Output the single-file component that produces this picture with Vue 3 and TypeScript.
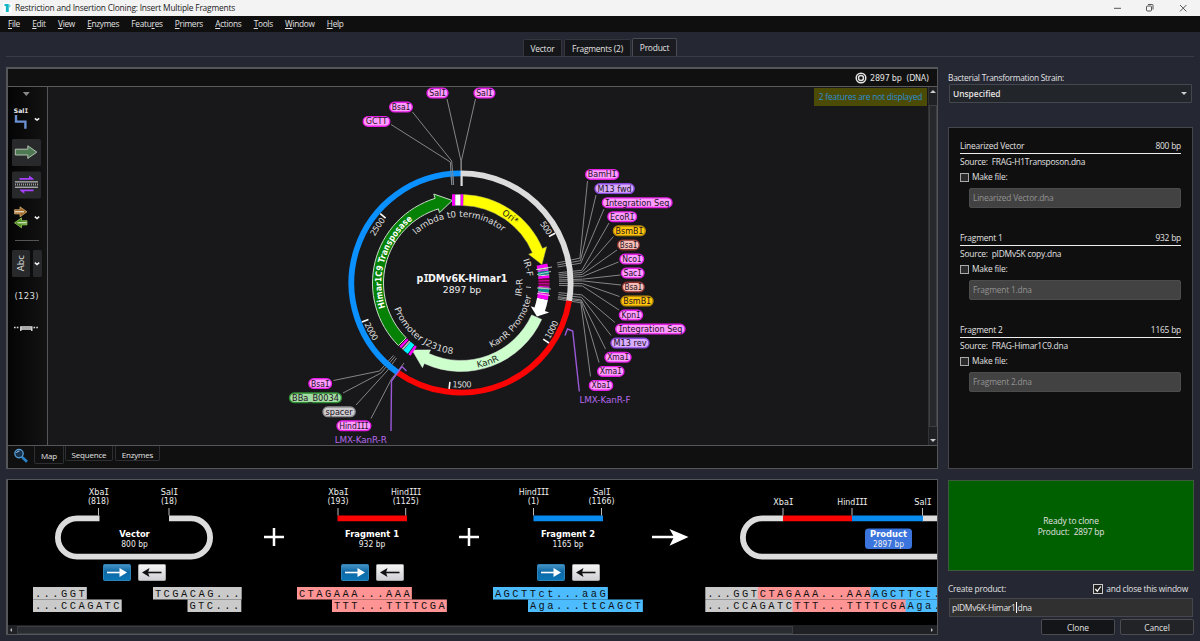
<script setup lang="ts">
interface Label {
  t: string
  x: number
  w: number
  y: number
  kind: string
  line: number[][]
}

const CX = 461
const CY = 283

function pt(r: number, deg: number): number[] {
  const a = (deg * Math.PI) / 180
  return [+(CX + r * Math.sin(a)).toFixed(2), +(CY - r * Math.cos(a)).toFixed(2)]
}
function arc(r: number, a: number, b: number): string {
  const large = Math.abs(b - a) > 180 ? 1 : 0
  return `M${pt(r, a)} A${r} ${r} 0 ${large} ${b > a ? 1 : 0} ${pt(r, b)}`
}
// Band between two radii, optionally ending in an arrow head
function band(a: number, b: number, tip?: number, r1 = 77.5, r2 = 88.5): string {
  const d = b > a ? 1 : 0
  const large = Math.abs(b - a) > 180 ? 1 : 0
  const head = tip === undefined ? `L${pt(r1, b)}` : `L${pt(r2 + 4.5, b)} L${pt(83, tip)} L${pt(r1 - 4, b)} L${pt(r1, b)}`
  return `M${pt(r1, a)} L${pt(r2, a)} A${r2} ${r2} 0 ${large} ${d} ${pt(r2, b)} ${head} A${r1} ${r1} 0 ${large} ${1 - d} ${pt(r1, a)}Z`
}
function poly(p: number[][]): string {
  return p.map((q) => q.join(',')).join(' ')
}
// Capital I is set with serifs in enzyme names
function parts(t: string): { s: string; serif: boolean }[] {
  return t.split(/(I+)/).filter(Boolean).map((s) => ({ s, serif: s[0] === 'I' }))
}

const rightSites: [string, number, number, number, string, number, number, number][] = [
  ['BamHI', 585, 34.3, 174.3, 'pink', 587.5, 181, 78.2],
  ['M13 fwd', 594.3, 40.5, 188.5, 'violet', 596, 195, 79.4],
  ['Integration Seq', 601.7, 71, 202.6, 'pink', 604, 209, 80.6],
  ['EcoRI', 607.2, 30, 216.6, 'pink', 609, 223, 84],
  ['BsmBI', 612.7, 33.3, 230.7, 'gold', 613.5, 236.5, 85],
  ['BsaI', 617, 23, 244.8, 'rose', 617, 250, 86],
  ['NcoI', 619.3, 25, 259, 'pink', 618.5, 262, 87],
  ['SacI', 620.7, 24, 273, 'pink', 620.5, 275, 88.2],
  ['BsaI', 621.7, 23.3, 287, 'rose', 621, 285, 89],
  ['BsmBI', 620.3, 33.4, 301, 'gold', 619.5, 296.5, 90.3],
  ['KpnI', 618.7, 24.6, 315, 'pink', 619, 310, 91.4],
  ['Integration Seq', 615, 70.7, 329, 'pink', 615, 322.5, 95.6],
  ['M13 rev', 610.3, 39.4, 343, 'violet', 611, 335.5, 96.8],
  ['XmaI', 604.3, 27.4, 357.2, 'pink', 605.5, 349, 98],
  ['XmaI', 597, 27.6, 371.3, 'pink', 599, 362.5, 98.6],
  ['XbaI', 588.7, 24.6, 385.3, 'pink', 590.5, 376.5, 99.4],
]
const labels: Label[] = [
  ...rightSites.map(([t, x, w, y, kind, lx, ly, a]) => ({ t, x, w, y, kind, line: [[lx, ly], pt(121.5, a), pt(98, a)] })),
  { t: 'SalI', x: 426.3, w: 22.4, y: 93, kind: 'pink', line: [[447, 99], [461, 161], [461, 171]] },
  { t: 'SalI', x: 473.3, w: 22.2, y: 93, kind: 'pink', line: [[475.5, 99], [461.3, 161], [461.3, 171]] },
  { t: 'BsaI', x: 389, w: 24, y: 107, kind: 'pink', line: [[412.5, 112], [451.7, 161], [453.6, 185]] },
  { t: 'GCTT', x: 362.5, w: 28, y: 121.3, kind: 'pink', line: [[391, 124.5], [450.3, 162], [451.8, 185]] },
  { t: 'BsaI', x: 308.2, w: 24, y: 383.5, kind: 'pink', line: [[333.5, 380.5], [379.5, 371], [393.5, 355.3]] },
  { t: 'BBa_B0034', x: 288.8, w: 53.4, y: 397.7, kind: 'green', line: [[343, 393], [381, 373], [395, 356.5]] },
  { t: 'spacer', x: 322.3, w: 33.6, y: 411.7, kind: 'gray', line: [[356, 405], [387, 371], [396.5, 358]] },
  { t: 'HindIII', x: 336.3, w: 35.2, y: 425.7, kind: 'pink', line: [[371, 418.5], [391.5, 379], [404, 363]] },
]

const ticks = [
  { n: 500, a: 62.1, from: 53, to: 60.6, r: 98.5 },
  { n: 1000, a: 124.3, from: 122.5, to: 111.7, r: 105 },
  { n: 1500, a: 186.4, from: 184.8, to: 173.8, r: 104.5 },
  { n: 2000, a: 248.5, from: 247, to: 236, r: 105 },
  { n: 2500, a: 310.7, from: 298.3, to: 309.2, r: 98 },
]
const curved = [
  { id: 'lt0', t: 'lambda t0 terminator', r: 66, a: -43, b: 39, fill: '#ddd' },
  { id: 'ori', t: 'Ori*', r: 79.8, a: 30.5, b: 42.8, fill: '#222' },
  { id: 'him', t: 'Himar1C9 Transposase', r: 79.6, a: 252, b: 322.5, fill: '#fff', bold: true },
  { id: 'pro', t: 'Promoter J23108', r: 71.5, a: 249, b: 186.5, fill: '#ddd' },
  { id: 'kpr', t: 'KanR Promoter', r: 71.5, a: 155, b: 100.5, fill: '#ddd' },
  { id: 'kan', t: 'KanR', r: 86.3, a: 169, b: 153.8, fill: '#1c2c1c' },
  { id: 'irf', t: 'IR-F', r: 66.3, a: 69.5, b: 84.5, fill: '#ddd' },
  { id: 'irr', t: 'IR-R', r: 61.5, a: 103, b: 86, fill: '#ddd' },
]
const stack: [number, number, string][] = [
  [77.2, 79.8, '#ff00ff'], [79.8, 80.6, '#d8d8d8'], [80.6, 82, '#c040e0'], [82, 84.4, '#009090'],
  [84.4, 85.2, '#ddd'], [85.2, 87, '#ff00ff'], [87, 88, '#700040'], [88, 89, '#e000a0'],
  [89, 90.2, '#70003c'], [90.2, 91, '#f000c0'], [91, 92.2, '#80104c'], [92.2, 93, '#ff00ff'], [93, 93.8, '#aaa'],
  [93.8, 96.2, '#009090'], [96.2, 97, '#ddd'], [97, 101, '#ff00ff'],
]

const menu = [['', 'F', 'ile'], ['', 'E', 'dit'], ['', 'V', 'iew'], ['', 'E', 'nzymes'], ['Featu', 'r', 'es'], ['', 'P', 'rimers'], ['', 'A', 'ctions'], ['', 'T', 'ools'], ['', 'W', 'indow'], ['', 'H', 'elp']]
const sources = [
  { name: 'Linearized Vector', bp: '800 bp', src: 'FRAG-H1Transposon.dna', file: 'Linearized Vector.dna' },
  { name: 'Fragment 1', bp: '932 bp', src: 'pIDMv5K copy.dna', file: 'Fragment 1.dna' },
  { name: 'Fragment 2', bp: '1165 bp', src: 'FRAG-Himar1C9.dna', file: 'Fragment 2.dna' },
]

const sites = [
  { x: 98.5, w: 19.5, t: 'XbaI', p: '(818)', pw: 21 }, { x: 169, w: 16.5, t: 'SalI', p: '(18)', pw: 16 },
  { x: 338, w: 19.5, t: 'XbaI', p: '(193)', pw: 21 }, { x: 405.7, w: 29.5, t: 'HindIII', p: '(1125)', pw: 26 },
  { x: 533.5, w: 29.5, t: 'HindIII', p: '(1)', pw: 11.5 }, { x: 601.5, w: 16.5, t: 'SalI', p: '(1166)', pw: 26 },
  { x: 783, w: 19.5, t: 'XbaI', p: '', pw: 0 }, { x: 852, w: 29.5, t: 'HindIII', p: '', pw: 0 }, { x: 922.5, w: 16.5, t: 'SalI', p: '', pw: 0 },
]
const titles = [
  { x: 134.5, t: 'Vector', w: 30.5, s: '800 bp', sw: 26.5 },
  { x: 372, t: 'Fragment 1', w: 54, s: '932 bp', sw: 26.5 },
  { x: 568, t: 'Fragment 2', w: 54, s: '1165 bp', sw: 31 },
  { x: 888.5, t: 'Product', w: 37, s: '2897 bp', sw: 31 },
]
const G = '#cacaca'
const R = '#ff9494'
const B = '#4cbcff'
const seqs = [
  { x: 33, row: 0, c: G, t: '...GGT' }, { x: 33, row: 1, c: G, t: '...CCAGATC' },
  { x: 153, row: 0, c: G, t: 'TCGACAG...' }, { x: 187.5, row: 1, c: G, t: 'GTC...' },
  { x: 297, row: 0, c: R, t: 'CTAGAAA...AAA' }, { x: 332, row: 1, c: R, t: 'TTT...TTTTCGA' },
  { x: 493, row: 0, c: B, t: 'AGCTTct...aaG' }, { x: 528, row: 1, c: B, t: 'Aga...ttCAGCT' },
  { x: 705.3, row: 0, c: G, t: '...GGT' }, { x: 757.8, row: 0, c: R, t: 'CTAGAAA...AAA' }, { x: 870.6, row: 0, c: B, t: 'AGCTTct.' },
  { x: 705.3, row: 1, c: G, t: '...CCAGATC' }, { x: 792.6, row: 1, c: R, t: 'TTT...TTTTCGA' }, { x: 905.6, row: 1, c: B, t: 'Aga.' },
]
</script>

<template>
  <div class="win">
    <header class="title">
      <svg class="logo" width="9" height="10" viewBox="0 0 9 10"><rect width="9" height="10" rx="1.5" fill="#fff" /><path d="M2.2 1V3M3.6 1V9M5 1V9" stroke="#13b5c4" stroke-width="1.5" /><path d="M6 2.2h1.6M6 3.8h1.4" stroke="#36c5d0" stroke-width="1" /></svg>
      <span class="ttl">Restriction and Insertion Cloning: Insert Multiple Fragments</span>
      <svg class="ctl" width="80" height="16" viewBox="1110 0 80 16" fill="none" stroke="#444" stroke-width="0.9">
        <path d="M1114 8.3h7M1180 5l6.4 6.4M1186.4 5l-6.4 6.4" /><rect x="1146.5" y="6" width="5" height="5" rx="1" /><path d="M1148 4.5h4.2q.8 0 .8.8v4.2" />
      </svg>
    </header>
    <nav class="menu"><span v-for="m in menu" :key="m.join('')">{{ m[0] }}<u>{{ m[1] }}</u>{{ m[2] }}</span></nav>

    <div class="tabs">
      <span class="tab t1">Vector</span><span class="tab t2">Fragments (2)</span><span class="tab t3">Product</span>
    </div>

    <main class="body">
      <section class="left">
        <div class="mapbox">
          <div class="maphead">
            <svg width="12" height="12" viewBox="0 0 12 12" fill="none"><circle cx="6" cy="6" r="4.8" stroke="#e4e4e4" stroke-width="1.500" /><circle cx="6" cy="6" r="2.500" stroke="#e4e4e4" stroke-width="1.400" /></svg>
            <span>2897 bp&nbsp; (DNA)</span>
          </div>
          <div class="mid">
            <svg class="side" width="39" height="358" viewBox="8 87 39 358">
              <path d="M22.8 92h7l-3.5 4z" fill="#888" />
              <text x="13.8" y="112.8" class="v b" font-size="6.2" fill="#eee" textLength="13.6" lengthAdjust="spacingAndGlyphs">Sal<tspan class="i">I</tspan></text>
              <path d="M16 115v6.6h9.4v7.2" fill="none" stroke="#6a90d0" stroke-width="2.4" />
              <path d="M34.8 118.3l2.2 1.8 2.2-1.8M34.8 216.7l2.2 1.8 2.2-1.8" fill="none" stroke="#f4f4f4" stroke-width="1.5" />
              <g fill="#28292b"><rect x="12" y="139" width="29" height="27" rx="1.5" /><rect x="12" y="171.5" width="29" height="27" rx="1.5" /><rect x="12" y="250" width="18" height="27" rx="1.5" /><rect x="33" y="250" width="9" height="27" rx="1.5" /></g>
              <path d="M15.3 149.2h12.5v-3.4l9 6.3-9 6.3v-3.4H15.3z" fill="#4d7a52" stroke="#b4c2b4" stroke-width="1" />
              <path d="M15 181.900h23M15 187.200h23" stroke="#ddd" stroke-width="1" /><path d="M15 184.5h23" stroke="#999" stroke-width="2" stroke-dasharray="1 1" />
              <path d="M19.500 179.800h14v-1l-4.400-3.400v2.600h-9.600zM33.500 189.400h-13.500v1l4.400 3.400v-2.600h9.100z" fill="#a840ff" />
              <path d="M14.500 209.700h5.500v-2.900l7 5-7 5v-2.900h-5.500z" fill="#a06a28" stroke="#d7b27c" stroke-width=".7" /><path d="M15 211.8h9" stroke="#fff" stroke-width="1" />
              <path d="M27 220.700h-5.500v-2.900l-7 5 7 5v-2.900H27z" fill="#4e8f1c" stroke="#a2d070" stroke-width=".7" /><path d="M17.500 222.8h9" stroke="#fff" stroke-width="1" />
              <path d="M15 240.500h24" stroke="#555" stroke-width="1" />
              <path d="M34.800 262.700l2.200 1.800 2.200-1.800" fill="none" stroke="#f4f4f4" stroke-width="1.500" />
              <text class="v" transform="translate(24 271.300) rotate(-90)" font-size="8.800" fill="#ddd" textLength="16.500">Abc</text>
              <text class="v" x="14.500" y="298.500" font-size="8.500" fill="#ddd" textLength="24">(123)</text>
              <path d="M14 327.500h5M33.500 327.500h5" stroke="#ddd" stroke-width="1.600" stroke-dasharray="1.600 1.200" />
              <path d="M20.800 331v-4h11v4M21 329h11" fill="none" stroke="#ddd" stroke-width="1.400" />
            </svg>
            <div class="canvas">
              <svg width="880" height="358" viewBox="48 87 880 358">
                <g fill="none" stroke="#858585" stroke-width="1">
                  <polyline v-for="(l, i) in labels" :key="i" :points="poly(l.line)" />
                </g>
                <g fill="none" stroke-width="5.800">
                  <path :d="arc(109.600, 0, 99.400)" stroke="#dcdcdc" /><path :d="arc(109.600, 99.400, 215.200)" stroke="#fb0404" /><path :d="arc(109.600, 215.200, 360)" stroke="#0a90ff" />
                </g>
                <path d="M450.700 170.500l1.100 14.500M452.500 170.500l1.100 14.500" stroke="#7a8894" stroke-width=".9" />
                <path d="M461.600 171v15" stroke="#dcdcdc" stroke-width="2.200" />
                <g fill="none" stroke="#9a58d8" stroke-width="1.400"><path d="M391 431l.5-50 10.500-14.500 4.500 4.500M579.300 391.500l-6.600-60.500-5.200-2-2.500 6.500" /></g>
                <g class="v" font-size="8.300" fill="#ddd">
                  <template v-for="k in ticks" :key="k.n">
                    <line :x1="pt(99.500, k.a)[0]" :y1="pt(99.500, k.a)[1]" :x2="pt(106.500, k.a)[0]" :y2="pt(106.500, k.a)[1]" stroke="#fff" stroke-width="1.600" />
                    <path :id="'k' + k.n" :d="arc(k.r, k.from, k.to + (k.to > k.from ? 6 : -6))" fill="none" />
                    <text><textPath :href="'#k' + k.n" :textLength="k.n === 500 ? 14 : 19.500">{{ k.n }}</textPath></text>
                  </template>
                </g>
                <path :d="band(225, 343, 354)" fill="#058205" stroke="#c8d8c8" />
                <path :d="band(1.500, 67, 77.200)" fill="#ffff00" stroke="#b0b060" stroke-width=".5" />
                <path :d="band(101, 108.500, 113.800)" fill="#fff" />
                <path :d="band(114.300, 204.500, 216.100)" fill="#ccffcc" stroke="#e4f4e4" stroke-width=".5" />
                <path d="M452 194.200h3v11.500h-3zM460.500 194.200h2.600v11.500h-2.600z" fill="#f0f" /><path d="M455.200 194.500h5.300v11h-5.300z" fill="#fff" />
                <path v-for="(s, i) in stack" :key="i" :d="band(s[0], s[1])" :fill="s[2]" />
                <path d="M536 269.500l16-2.500M537 274.500l14-3M526 287l5 .5M537 288l14 1M537 293.500l13 2" stroke="#ddd" stroke-width=".8" />
                <path :d="band(222.600, 224.200)" fill="#f0f" /><path :d="band(220.800, 222)" fill="#bbb" />
                <path :d="band(217, 220.600)" fill="#00f4ff" /><path :d="band(214.800, 216.500)" fill="#f0f" />
                <g class="v" font-size="8.800">
                  <template v-for="c in curved" :key="c.id">
                    <path :id="c.id" :d="arc(c.r, c.a, c.b + (c.b > c.a ? 5 : -5))" fill="none" />
                    <text :fill="c.fill" :class="{ b: c.bold }"><textPath :href="'#' + c.id" :textLength="(Math.abs(c.b - c.a) * c.r * Math.PI) / 180" lengthAdjust="spacingAndGlyphs">{{ c.t }}</textPath></text>
                  </template>
                </g>
                <g class="v" text-anchor="middle" font-size="8.800">
                  <g v-for="(l, i) in labels" :key="i" :class="l.kind">
                    <rect :x="l.x + 0.700" :y="l.y - 4.700" :width="l.w - 1.400" height="9.600" rx="4.800" stroke-width="1.400" />
                    <text :x="l.x + l.w / 2 - (l.t.endsWith('I') ? 0.400 : 0)" :y="l.y + 3" :textLength="l.w - 6.500" lengthAdjust="spacingAndGlyphs" fill="#241024"><tspan v-for="(p, j) in parts(l.t)" :key="j" :class="{ i: p.serif }">{{ p.s }}</tspan></text>
                  </g>
                  <text x="605" y="403.200" textLength="51" fill="#b468e8">LMX-KanR-F</text>
                  <text x="360.800" y="443.200" textLength="52" fill="#b468e8">LMX-KanR-R</text>
                  <text x="462" y="282" class="b" font-size="9.600" textLength="91" lengthAdjust="spacingAndGlyphs" fill="#f4f4f4">p<tspan class="i">I</tspan>DMv6K-Himar1</text>
                  <text x="462" y="293.300" font-size="9.300" textLength="38.500" fill="#eee">2897 bp</text>
                </g>
              </svg>
              <div class="warn">2 features are not displayed</div>
            </div>
            <div class="vscroll"><i class="up"></i><b></b><i class="dn"></i></div>
          </div>
          <div class="mapfoot">
            <svg width="16" height="16" viewBox="0 0 16 16"><path d="M9 9l5 4.800" stroke="#2a83c8" stroke-width="2.600" /><circle cx="6" cy="5.600" r="4.200" fill="#17324c" stroke="#56a0dc" stroke-width="1.300" /><path d="M3.500 5a3 3 0 0 1 3-2" stroke="#b8dcff" stroke-width=".9" fill="none" /></svg>
            <span class="bt map">Map</span><span class="bt seq">Sequence</span><span class="bt enz">Enzymes</span>
          </div>
        </div>

        <div class="clone">
          <svg width="930" height="145" viewBox="8 480 930 145">
            <defs>
              <linearGradient id="bl" x2="0" y2="1"><stop stop-color="#4794c4" /><stop offset=".45" stop-color="#0f69a6" /><stop offset="1" stop-color="#0a75b5" /></linearGradient>
              <linearGradient id="wh" x2="0" y2="1"><stop stop-color="#f6f6f6" /><stop offset="1" stop-color="#cfcfd4" /></linearGradient>
            </defs>
            <g fill="none" stroke-width="5.800">
              <path d="M99.500 518.400H77a19 19 0 0 0 0 38.200H191a19 19 0 0 0 0-38.200H169" stroke="#dcdcdc" />
              <path d="M783 518.400H762a19 19 0 0 0 0 38.200H940M922 518.400H940" stroke="#dcdcdc" />
              <path d="M337.500 518.400H407M783 518.400H852" stroke="#fb0404" /><path d="M533.500 518.400H603M852 518.400H923" stroke="#088aee" />
            </g>
            <g class="v" text-anchor="middle" font-size="8.400" fill="#eee">
              <template v-for="(s, i) in sites" :key="i">
                <text :x="s.x" :y="s.p ? 494.700 : 505" :textLength="s.w" lengthAdjust="spacingAndGlyphs"><tspan v-for="(p, j) in parts(s.t)" :key="j" :class="{ i: p.serif }">{{ p.s }}</tspan></text>
                <text v-if="s.p" :x="s.x" y="504.300" :textLength="s.pw" lengthAdjust="spacingAndGlyphs">{{ s.p }}</text>
                <rect :x="s.x - 0.500" y="508" width="1" height="7.500" fill="#bbb" />
              </template>
              <rect x="865" y="528.500" width="47" height="20.500" rx="3.500" fill="#3a74dc" />
              <template v-for="t in titles" :key="t.t">
                <text :x="t.x" y="537.300" class="b" :textLength="t.w" lengthAdjust="spacingAndGlyphs" fill="#fff">{{ t.t }}</text>
                <text :x="t.x" y="546.500" font-size="8" :textLength="t.sw" lengthAdjust="spacingAndGlyphs">{{ t.s }}</text>
              </template>
            </g>
            <path d="M264 537h20M274 528v18M459 537h20M469 528v18M652 537h22" stroke="#fff" stroke-width="2.500" />
            <path d="M669.500 529L688.500 537l-19 8.800 4.500-8.800z" fill="#fff" />
            <g v-for="x in [103, 341, 537]" :key="x">
              <rect :x="x + 0.500" y="564.500" width="27" height="16" rx="1" fill="url(#bl)" stroke="#2f83b8" />
              <path :d="`M${x + 4} 572.500h15`" stroke="#fff" stroke-width="1.600" /><path :d="`M${x + 16.500} 568l7.500 4.500-7.500 4.500z`" fill="#fff" />
              <rect :x="x + 35.500" y="564.500" width="27" height="16" rx="1" fill="url(#wh)" stroke="#aaa" />
              <path :d="`M${x + 43} 572.500h15.500`" stroke="#111" stroke-width="1.600" /><path :d="`M${x + 46.500} 568l-7.500 4.500 7.500 4.500-1.500-4.500z`" fill="#111" />
            </g>
            <g class="m" font-size="10.400">
              <g v-for="(s, i) in seqs" :key="i">
                <rect :x="s.x" :y="587 + s.row * 12.500" :width="s.t.length * 8.720 + 1.500" height="12.500" :fill="s.c" />
                <text :x="s.x + 1.900" :y="597.200 + s.row * 11.500" fill="#111">{{ s.t }}</text>
              </g>
            </g>
          </svg>
          <div class="hscroll"><i class="lf"></i><b></b><i class="rt"></i></div>
        </div>
      </section>

      <aside class="right">
        <label class="strain">Bacterial Transformation Strain:</label>
        <div class="select"><span>Unspecified</span><i></i></div>
        <div class="files">
          <div v-for="s in sources" :key="s.name" class="file">
            <div class="fh"><span>{{ s.name }}</span><span>{{ s.bp }}</span></div>
            <div class="src">Source:&nbsp; {{ s.src }}</div>
            <div class="mk"><i class="cb"></i><span>Make file:</span></div>
            <div class="inp">{{ s.file }}</div>
          </div>
        </div>
        <div class="ready"><span>Ready to clone</span><span>Product:&nbsp; 2897 bp</span></div>
        <div class="create">
          <span>Create product:</span>
          <span class="chk"><svg width="10" height="10" viewBox="0 0 10 10" fill="none"><rect x=".5" y=".5" width="9" height="9" fill="#222" stroke="#ccc" /><path d="M2.300 5l2 2.200L7.800 2.500" stroke="#fff" stroke-width="1.200" /></svg>and close this window</span>
        </div>
        <div class="name">pIDMv6K-Himar1<i></i>.dna</div>
        <div class="btns"><button>Clone</button><button>Cancel</button></div>
      </aside>
    </main>
  </div>
</template>

<style>
html, body { margin: 0; overflow: hidden; background: #252733; }
</style>
<style scoped>
* { box-sizing: border-box; }
.win { width: 1200px; height: 641px; background: #252733; color: #e2e2e2; font: 8.4px/12px "Open Sans", "Noto Sans", sans-serif; letter-spacing: -0.2px; overflow: hidden; display: flex; flex-direction: column; white-space: nowrap; }
.v { font-family: "DejaVu Sans", sans-serif; letter-spacing: 0; }
.b { font-weight: bold; }
.i { font-family: "DejaVu Sans Mono", monospace; letter-spacing: -0.12em; }
.m { font-family: "Liberation Mono", monospace; letter-spacing: 2.48px; }
.pink rect { fill: #ff9cff; stroke: #e31fe3; }
.violet rect { fill: #d8acff; stroke: #8a48dc; }
.gold rect { fill: #ffc40c; stroke: #b88a08; }
.rose rect { fill: #f4beb6; stroke: #8c3230; }
.green rect { fill: #a2dca2; stroke: #2e8c34; }
.gray rect { fill: #cccccf; stroke: #8e8e92; }
.title { height: 16px; flex: none; background: #f3f3f3; color: #222; display: flex; align-items: center; padding-left: 3px; }
.ttl { margin-left: 3px; letter-spacing: -0.2px; }
.ctl { margin-left: auto; margin-right: 10px; }
.menu { height: 16px; flex: none; background: #0f0f0f; display: flex; gap: 12.2px; padding-left: 8px; line-height: 15px; letter-spacing: -0.29px; font-size: 8.3px; }
.menu u { text-underline-offset: 1px; }
.tabs { height: 25px; flex: none; margin: 0 6px; border-bottom: 1px solid #3a3d45; display: flex; justify-content: center; align-items: flex-end; gap: 2px; }
.tab { height: 17px; line-height: 18px; background: #15161a; border: 1px solid #34363e; border-bottom: 0; border-radius: 2px 2px 0 0; text-align: center; }
.t1 { width: 39px; } .t2 { width: 67px; }
.t3 { width: 45px; height: 18px; line-height: 18px; background: #1b1c22; border-color: #4a4c54; margin-left: -1px; }
.body { flex: 1; display: flex; padding: 10px 6px 0; gap: 10px; min-height: 0; }
.left { width: 932px; display: flex; flex-direction: column; gap: 10px; }
.mapbox { height: 402px; border: 2px solid #55565a; border-right-width: 1px; border-bottom-width: 1px; background: #101010; display: flex; flex-direction: column; }
.maphead { height: 18px; flex: none; border-bottom: 1px solid #5a5a5a; display: flex; justify-content: flex-end; align-items: center; gap: 3px; padding-right: 8px; font: 8px "DejaVu Sans", sans-serif; letter-spacing: -0.22px; }
.maphead span { padding-top: 1px; }
.mid { height: 358px; display: flex; }
.side { flex: none; background: linear-gradient(90deg, #040404, #131314); border-right: 1px solid #55565a; width: 40px; }
.canvas { position: relative; width: 880px; background: #18181b; }
.canvas svg, .clone svg { display: block; }
.warn { position: absolute; right: 1px; top: 1px; width: 113px; height: 18px; background: #4c4b05; color: #2b8ed8; line-height: 18px; text-align: center; }
.vscroll { flex: 1; background: #1f2125; border-left: 1px solid #333; display: flex; flex-direction: column; align-items: center; }
.vscroll b { width: 8px; height: 322px; margin-top: 12px; background: #26282c; border: 1px solid #3c3e42; }
.vscroll i { width: 0; border: 3px solid transparent; }
.up { border-bottom-color: #ccc !important; border-top-width: 0 !important; margin-top: 3px; }
.dn { border-top-color: #ccc !important; border-bottom-width: 0 !important; margin-top: 12px; }
.mapfoot { flex: 1; border-top: 1px solid #55565a; display: flex; padding-left: 5px; }
.mapfoot svg { margin-top: 2px; }
.bt { height: 15px; line-height: 18px; border: 1px solid #2e2f33; border-top: 0; text-align: center; border-radius: 0 0 2px 2px; font-size: 8px; }
.map { width: 30px; margin-left: 5px; height: 18px; line-height: 20px; } .seq { width: 48px; margin-left: 1px; } .enz { width: 45px; margin-left: 2px; }
.clone { height: 156px; border: 1px solid #55565a; border-left-width: 2px; background: #000; overflow: hidden; }
.hscroll { height: 9px; background: #1f2125; display: flex; align-items: center; }
.hscroll i { width: 0; border: 2.500px solid transparent; }
.lf { border-right-color: #bbb !important; border-left-width: 0 !important; margin: 0 5px 0 2px; }
.rt { border-left-color: #bbb !important; border-right-width: 0 !important; margin-left: auto; margin-right: 4px; }
.hscroll b { width: 776px; height: 8px; background: #292c31; border: 1px solid #3c3e42; }
.right { width: 246px; display: flex; flex-direction: column; }
.strain { margin-top: 5px; height: 12px; letter-spacing: -0.26px; }
.select { height: 19px; margin-left: 1px; margin-right: 2px; border: 1px solid #44474d; background: #222529; display: flex; align-items: center; justify-content: space-between; padding: 0 4px 0 3px; font-weight: 600; letter-spacing: 0; border-radius: 1px; }
.select i { border: 3px solid transparent; border-top-color: #ccc; border-bottom: 0; }
.files { margin-top: 24px; height: 342px; width: 245px; border: 1px solid #45474c; background: #0f0f0f; padding: 12px 11px; }
.file { height: 92px; }
.fh { display: flex; justify-content: space-between; border-bottom: 1px solid #eee; height: 14px; }
.src { margin-top: 2px; height: 13px; }
.mk { margin-top: 1px; display: flex; align-items: center; gap: 3px; height: 14px; }
.cb { width: 9px; height: 9px; border: 1px solid #aaa; background: #2b2b2b; }
.inp { margin: 4px 0 0 9px; height: 20px; padding-left: 3px; background: #424242; color: #929292; border: 1px solid #4c4c4c; line-height: 18px; border-radius: 2px; }
.ready { margin-top: 11px; height: 91px; border: 1px solid #3d5a3d; background: #006000; display: flex; flex-direction: column; align-items: center; justify-content: center; line-height: 11px; letter-spacing: -0.13px; }
.create { display: flex; justify-content: space-between; margin-top: 12px; padding-right: 6px; height: 15px; }
.chk { display: flex; align-items: center; gap: 3px; height: 12px; }
.name { height: 19px; border: 1px solid #45474c; background: #303030; line-height: 18px; padding-left: 2px; margin-left: 1px; margin-right: 1px; font-size: 8.500px; letter-spacing: -0.3px; }
.name i { display: inline-block; width: 1px; height: 11px; margin-right: -1px; background: #fff; vertical-align: -2px; }
.btns { display: flex; justify-content: flex-end; gap: 5px; margin-top: 2px; }
.btns button { width: 74px; height: 16px; padding: 0; border: 1px solid #4a4c52; background: #212327; color: #e2e2e2; font: inherit; letter-spacing: -0.05px; line-height: 15px; border-radius: 2px; }
.btns button:first-child { background: #141518; }
</style>
